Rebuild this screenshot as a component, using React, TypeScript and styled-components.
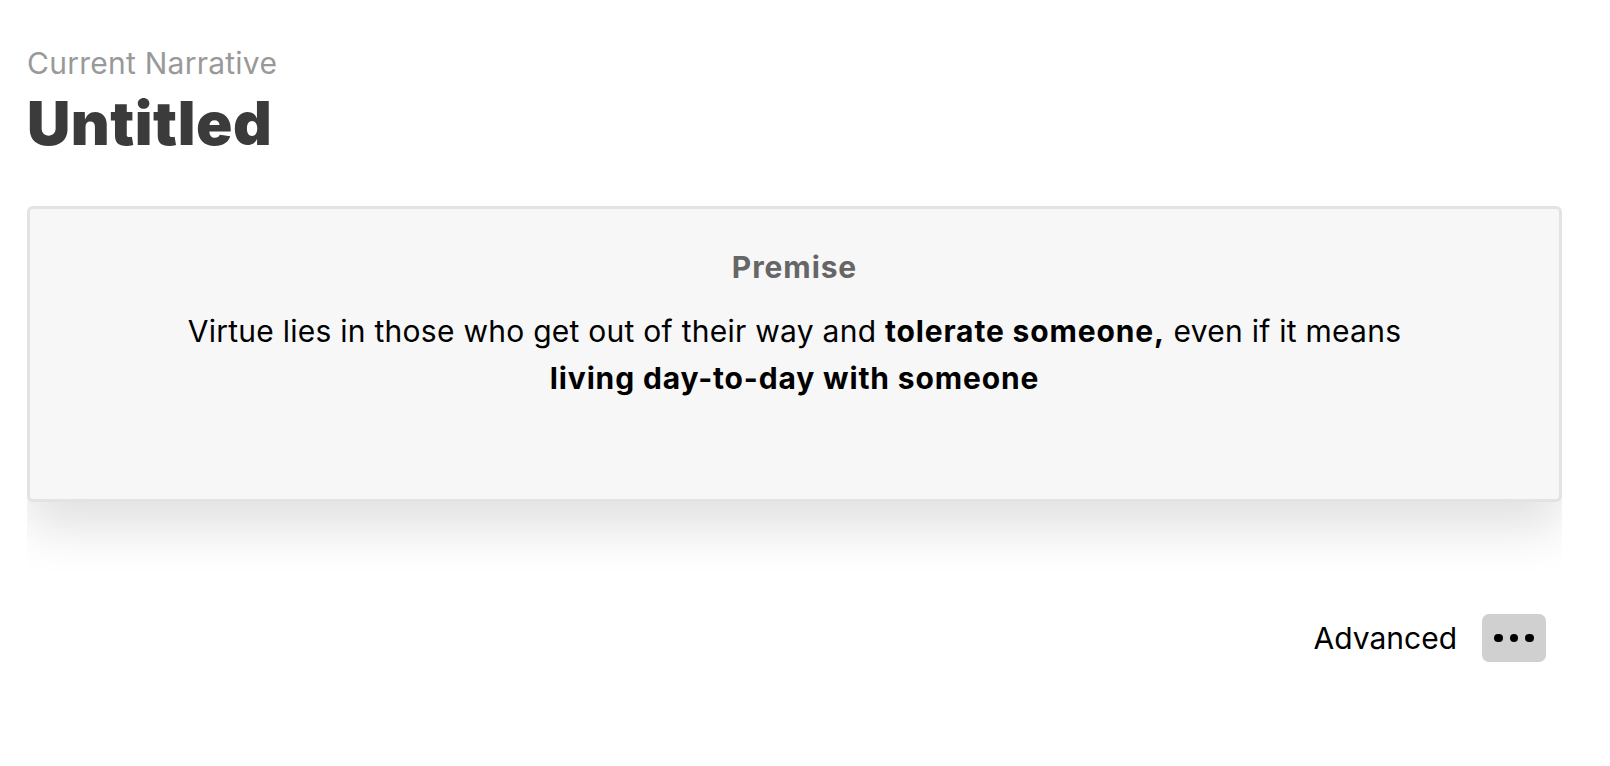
import React from "react";
import styled, { createGlobalStyle } from "styled-components";

const GlobalStyle = createGlobalStyle`
  html, body {
    margin: 0;
    padding: 0;
    background: #ffffff;
  }
  body {
    font-family: Inter, "Noto Sans", "Liberation Sans", sans-serif;
    color: #000;
  }
`;

const Page = styled.main`
  display: flex;
  flex-direction: column;
  padding: 45px 48px 40px 27px;
`;

const Header = styled.header`
  display: flex;
  flex-direction: column;
  gap: 6px;
  margin-bottom: 47px;
`;

const Eyebrow = styled.div`
  font-size: 30px;
  line-height: 36px;
  font-weight: 400;
  color: #999999;
  letter-spacing: 0.25px;
`;

const Title = styled.h1`
  margin: 0;
  font-size: 60px;
  line-height: 72px;
  font-weight: 900;
  color: #3b3b3b;
  letter-spacing: 0.5px;
`;

const ShadowClip = styled.section`
  overflow: hidden;
  padding-bottom: 112px;
`;

const PremiseCard = styled.div`
  display: flex;
  flex-direction: column;
  align-items: center;
  gap: 23px;
  background: #f7f7f7;
  border: 3px solid #e3e3e3;
  border-radius: 6px;
  padding: 40px 40px 97px;
  box-shadow: 0 26px 50px rgba(0, 0, 0, 0.12);
`;

const CardTitle = styled.h2`
  margin: 0;
  font-size: 30px;
  line-height: 36px;
  font-weight: 700;
  color: #666666;
  letter-spacing: 0.9px;
`;

const PremiseText = styled.p`
  margin: 0;
  max-width: 1260px;
  font-size: 30px;
  line-height: 47px;
  font-weight: 400;
  text-align: center;
  color: #000;
  letter-spacing: 0.26px;

  strong {
    font-weight: 700;
    letter-spacing: 0.85px;
  }
`;

const Footer = styled.div`
  display: flex;
  justify-content: flex-end;
  align-items: center;
  gap: 25px;
  padding-right: 16px;
`;

const FooterLabel = styled.span`
  font-size: 30px;
  line-height: 36px;
  color: #000;
`;

const MoreButton = styled.button`
  display: flex;
  align-items: center;
  justify-content: center;
  gap: 7px;
  width: 64px;
  height: 48px;
  padding: 0;
  border: none;
  border-radius: 7px;
  background: #d0d0d0;
  cursor: pointer;
`;

const Dot = styled.span`
  width: 8.5px;
  height: 8.5px;
  border-radius: 50%;
  background: #000;
`;

export default function App() {
  return (
    <>
      <GlobalStyle />
      <Page>
        <Header>
          <Eyebrow>Current Narrative</Eyebrow>
          <Title>Untitled</Title>
        </Header>
        <ShadowClip>
          <PremiseCard>
            <CardTitle>Premise</CardTitle>
            <PremiseText>
              Virtue lies in those who get out of their way and{" "}
              <strong>tolerate someone,</strong> even if it means{" "}
              <strong>living day-to-day with someone</strong>
            </PremiseText>
          </PremiseCard>
        </ShadowClip>
        <Footer>
          <FooterLabel>Advanced</FooterLabel>
          <MoreButton aria-label="More options">
            <Dot />
            <Dot />
            <Dot />
          </MoreButton>
        </Footer>
      </Page>
    </>
  );
}
